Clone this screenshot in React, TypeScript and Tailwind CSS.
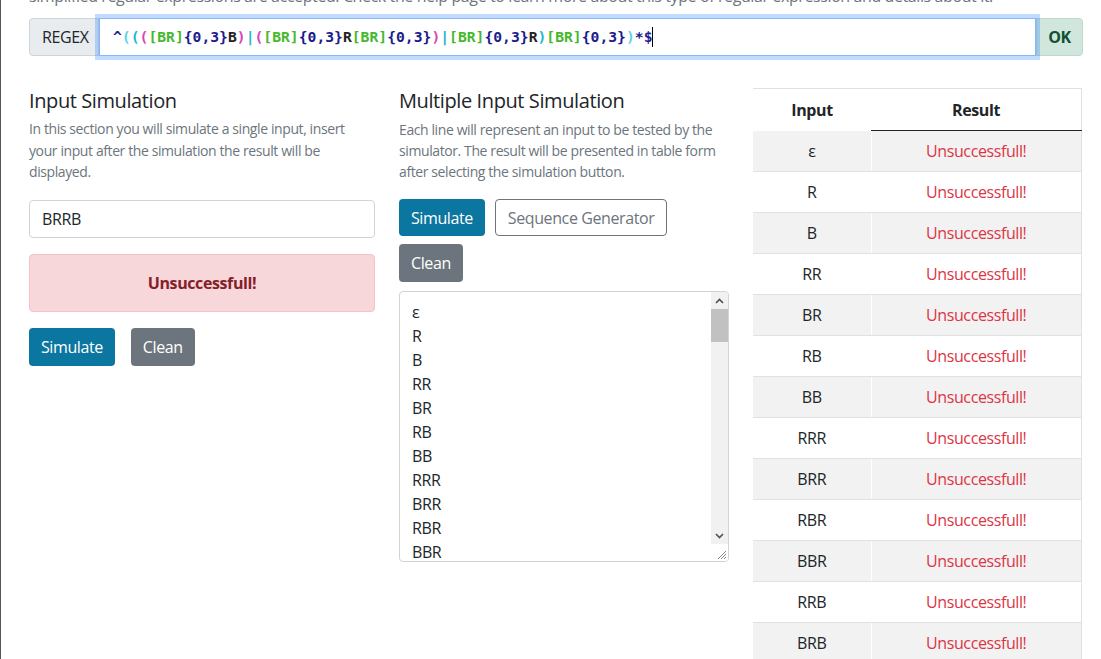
import React from "react";

const FONT = "font-['Segoe_UI','Open_Sans','Noto_Sans',sans-serif] tracking-[-0.025em]";

type Tok = { t: string; c: string };

// regex tokens with bracket-depth colouring
const regexTokens: Tok[] = [
  { t: "^", c: "text-[#1c1c8c]" },
  { t: "(", c: "text-[#5fd3e8]" },
  { t: "(", c: "text-[#22b8cf]" },
  { t: "(", c: "text-[#d946b8]" },
  { t: "[BR]", c: "text-[#46b82e]" },
  { t: "{0,3}", c: "text-[#1c1c8c]" },
  { t: "B", c: "text-[#222]" },
  { t: ")", c: "text-[#d946b8]" },
  { t: "|", c: "text-[#22b8cf]" },
  { t: "(", c: "text-[#d946b8]" },
  { t: "[BR]", c: "text-[#46b82e]" },
  { t: "{0,3}", c: "text-[#1c1c8c]" },
  { t: "R", c: "text-[#222]" },
  { t: "[BR]", c: "text-[#46b82e]" },
  { t: "{0,3}", c: "text-[#1c1c8c]" },
  { t: ")", c: "text-[#d946b8]" },
  { t: "|", c: "text-[#22b8cf]" },
  { t: "[BR]", c: "text-[#46b82e]" },
  { t: "{0,3}", c: "text-[#1c1c8c]" },
  { t: "R", c: "text-[#222]" },
  { t: ")", c: "text-[#22b8cf]" },
  { t: "[BR]", c: "text-[#46b82e]" },
  { t: "{0,3}", c: "text-[#1c1c8c]" },
  { t: ")", c: "text-[#5fd3e8]" },
  { t: "*", c: "text-[#1c1c8c]" },
  { t: "$", c: "text-[#1c1c8c]" },
];

const sequence = ["ε", "R", "B", "RR", "BR", "RB", "BB", "RRR", "BRR", "RBR", "BBR", "RRB", "BRB"];

function Scrollbar() {
  return (
    <div className="absolute right-0 top-0 bottom-0 w-[17px] flex flex-col bg-[#f1f1f1]">
      <div className="h-[17px] flex items-center justify-center">
        <svg width="9" height="6" viewBox="0 0 9 6">
          <path d="M1 5 L4.5 1.5 L8 5" stroke="#505050" strokeWidth="1.6" fill="none" />
        </svg>
      </div>
      <div className="h-[33px] bg-[#c1c1c1]" />
      <div className="flex-1" />
      <div className="h-[17px] flex items-center justify-center">
        <svg width="9" height="6" viewBox="0 0 9 6">
          <path d="M1 1 L4.5 4.5 L8 1" stroke="#505050" strokeWidth="1.6" fill="none" />
        </svg>
      </div>
      <div className="h-[17px] bg-white flex items-end justify-end pr-[1px] pb-[1px]">
        <svg width="11" height="11" viewBox="0 0 11 11">
          <path d="M10 2 L2 10 M10 5 L5 10 M10 8 L8 10" stroke="#888" strokeWidth="1" />
        </svg>
      </div>
    </div>
  );
}

export default function App() {
  return (
    <div className={`${FONT} min-h-[659px] bg-white border-l border-[#555] text-[#212529] overflow-hidden`}>
      <div className="pl-[28px] w-[1082px]">
        <p className="text-[16px] leading-[24px] text-[#6c757d] -mt-[16px] whitespace-nowrap">
          simplified regular expressions are accepted. Check the help page to learn more about this type of regular expression and details about it.
        </p>

        {/* regex input group */}
        <div className="mt-[10px] flex h-[38px]">
          <div className="flex items-center px-[12px] bg-[#e9ecef] border border-[#ced4da] rounded-l-[4px] text-[16px] w-[70px]">
            REGEX
          </div>
          <div className="flex-1 flex items-center border border-[#86b7fe] bg-white pl-[13px] pr-[12px] shadow-[0_0_0_4px_rgba(13,110,253,0.25)] relative z-10">
            <span className="font-['DejaVu_Sans_Mono','Liberation_Mono',monospace] tracking-normal font-bold text-[14.7px] whitespace-pre">
              {regexTokens.map((k, i) => (
                <span key={i} className={k.c}>
                  {k.t}
                </span>
              ))}
            </span>
            <span className="w-px h-[20px] bg-black" />
          </div>
          <button className="w-[47px] bg-[#d1e7dd] border border-[#badbcc] rounded-r-[4px] text-[#0f5132] font-bold text-[16px]">
            OK
          </button>
        </div>

        <div className="mt-[32px] flex gap-6">
          {/* single input */}
          <div className="w-[346px] pt-[1px]">
            <h5 className="text-[20px] leading-[24px] font-normal mb-[5px]">Input Simulation</h5>
            <p className="text-[14px] leading-[21.5px] text-[#6c757d]">
              In this section you will simulate a single input, insert your input after the simulation the result will be displayed.
            </p>
            <div className="mt-[17px] h-[38px] border border-[#ced4da] rounded-[4px] px-[12px] flex items-center text-[16px]">
              BRRB
            </div>
            <div className="mt-[16px] h-[58px] bg-[#f8d7da] border border-[#f5c2c7] rounded-[4px] flex items-center justify-center text-[#842029] font-bold text-[16px]">
              Unsuccessfull!
            </div>
            <div className="mt-[16px] flex gap-4">
              <button className="h-[38px] px-[12px] rounded-[4px] bg-[#0b76a0] text-white text-[16px]">Simulate</button>
              <button className="h-[38px] px-[12px] rounded-[4px] bg-[#6c757d] text-white text-[16px]">Clean</button>
            </div>
          </div>

          {/* multiple input */}
          <div className="w-[330px] pt-[1px]">
            <h5 className="text-[20px] leading-[24px] font-normal mb-[6px]">Multiple Input Simulation</h5>
            <p className="text-[14px] leading-[21px] text-[#6c757d] pr-[10px]">
              Each line will represent an input to be tested by the simulator. The result will be presented in table form after selecting the simulation button.
            </p>
            <div className="mt-[17px] flex flex-wrap gap-x-[10px] gap-y-[8px] w-[280px]">
              <button className="h-[37px] px-[12px] rounded-[4px] bg-[#0b76a0] text-white text-[16px]">Simulate</button>
              <button className="h-[37px] px-[12px] rounded-[4px] border border-[#6c757d] text-[#6c757d] text-[16px]">
                Sequence Generator
              </button>
              <button className="h-[38px] px-[12px] rounded-[4px] bg-[#6c757d] text-white text-[16px]">Clean</button>
            </div>
            <div className="mt-[9px] h-[271px] border border-[#ced4da] rounded-[4px] relative overflow-hidden">
              <div className="pl-[12px] pt-[8px] text-[16px] leading-[24px]">
                {sequence.slice(0, 11).map((s) => (
                  <div key={s}>{s}</div>
                ))}
              </div>
              <Scrollbar />
            </div>
          </div>

          {/* result table */}
          <div className="w-[329px]">
            <table className="w-full border-collapse border-t border-r border-[#dee2e6] text-[16px]">
              <thead>
                <tr className="h-[42px]">
                  <th className="w-[118px] font-bold">Input</th>
                  <th className="font-bold border-b border-[#212529]">Result</th>
                </tr>
              </thead>
              <tbody>
                {sequence.map((s, i) => (
                  <tr key={s} className="h-[41px]">
                    <td
                      className={`text-center border-b border-r border-b-[#dee2e6] border-r-white ${
                        i % 2 === 0 ? "bg-[#f2f2f2]" : "bg-white"
                      }`}
                    >
                      {s}
                    </td>
                    <td
                      className={`text-center text-[#dc3545] border-b border-[#dee2e6] ${
                        i % 2 === 0 ? "bg-[#f2f2f2]" : "bg-white"
                      }`}
                    >
                      Unsuccessfull!
                    </td>
                  </tr>
                ))}
              </tbody>
            </table>
          </div>
        </div>
      </div>
    </div>
  );
}
